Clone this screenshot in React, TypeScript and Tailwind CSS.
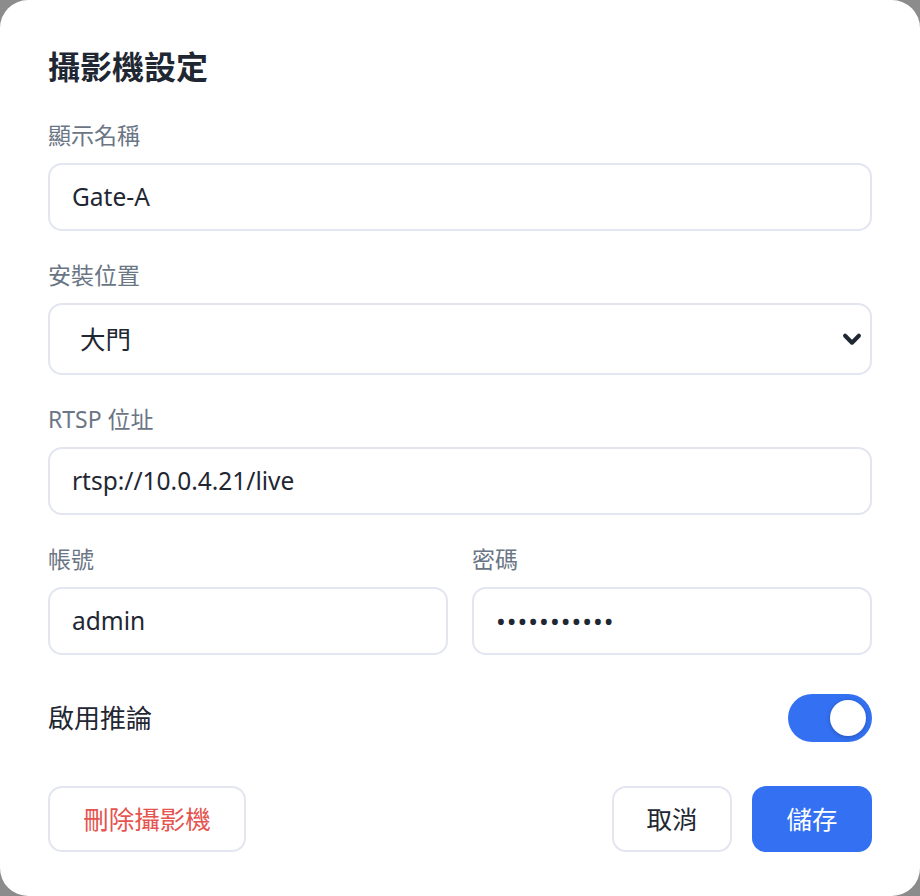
import React from "react";

const font = { fontFamily: '"Noto Sans", "Noto Sans CJK TC", sans-serif' };

function Label({ children }: { children: React.ReactNode }) {
  return (
    <div className="text-[23px] leading-[30px] text-[#6b7685] mb-[13px]">{children}</div>
  );
}

function Field({ label, value, className = "" }: { label: string; value: string; className?: string }) {
  return (
    <div className={className}>
      <Label>{label}</Label>
      <div className="h-[68px] rounded-[14px] border-2 border-[#e3e6f0] bg-white flex items-center px-[22px] text-[24.5px] text-[#1f2733]">
        {value}
      </div>
    </div>
  );
}

export default function App() {
  return (
    <div className="w-[920px] h-[896px] bg-[#8c8c8c]" style={font}>
      <div className="w-full h-full bg-white rounded-[28px] px-[48px] pt-[48px] flex flex-col">
        <h1 className="text-[32px] leading-[38px] font-bold text-[#1f2733]">攝影機設定</h1>

        <Field label="顯示名稱" value="Gate-A" className="mt-[34px]" />

        <div className="mt-[29px]">
          <Label>安裝位置</Label>
          <div className="h-[72px] rounded-[14px] border-2 border-[#e3e6f0] bg-white flex items-center justify-between pl-[30px] pr-[7px] text-[25.5px] text-[#1f2733]">
            <span>大門</span>
            <svg width="22" height="22" viewBox="0 0 24 24" fill="none" stroke="#1f2733" strokeWidth="4.5" strokeLinecap="round" strokeLinejoin="round">
              <path d="M4.5 8.5l7.5 7.5 7.5-7.5" />
            </svg>
          </div>
        </div>

        <Field label="RTSP 位址" value="rtsp://10.0.4.21/live" className="mt-[29px]" />

        <div className="mt-[29px] grid grid-cols-2 gap-x-[24px]">
          <Field label="帳號" value="admin" />
          <div>
            <Label>密碼</Label>
            <div className="h-[68px] rounded-[14px] border-2 border-[#e3e6f0] bg-white flex items-center px-[22px] text-[26px] text-[#1f2733] tracking-[1px]">
              •••••••••••
            </div>
          </div>
        </div>

        <div className="mt-[39px] flex items-center justify-between">
          <span className="text-[26px] text-[#1f2733]">啟用推論</span>
          <div className="w-[84px] h-[48px] rounded-full bg-[#3371f2] relative">
            <div className="absolute right-[6px] top-[6px] w-[36px] h-[36px] rounded-full bg-white shadow-[0_1px_4px_rgba(0,0,0,0.25)]" />
          </div>
        </div>

        <div className="mt-[44px] flex items-center">
          <button className="h-[66px] w-[198px] rounded-[14px] border-2 border-[#e3e6f0] bg-white text-[25.5px] text-[#e5544f]">
            刪除攝影機
          </button>
          <div className="ml-auto flex gap-[20px]">
            <button className="h-[66px] w-[120px] rounded-[14px] border-2 border-[#e3e6f0] bg-white text-[25.5px] text-[#1f2733]">
              取消
            </button>
            <button className="h-[66px] w-[120px] rounded-[14px] bg-[#3371f2] text-[25.5px] text-white">
              儲存
            </button>
          </div>
        </div>
      </div>
    </div>
  );
}
